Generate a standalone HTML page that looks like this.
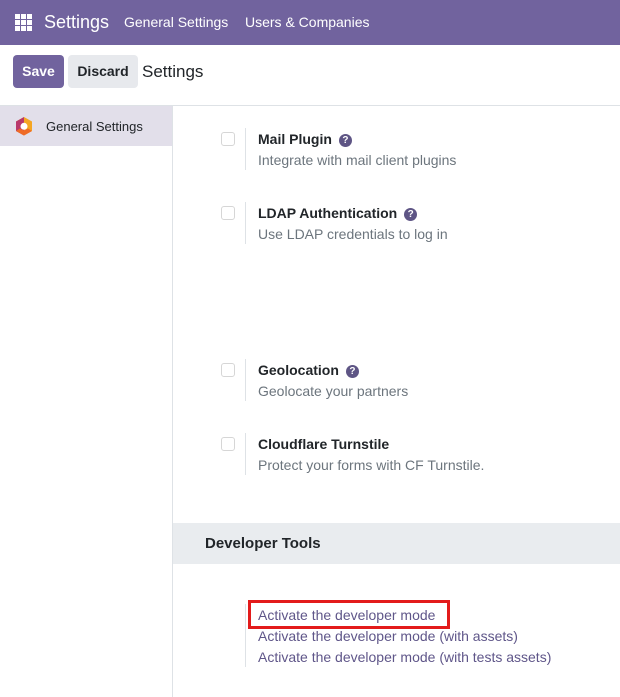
<!DOCTYPE html>
<html><head><style>
*{box-sizing:border-box;margin:0;padding:0}
body{width:620px;height:697px;overflow:hidden;font-family:"Liberation Sans",sans-serif;background:#fff;position:relative;color:#212529}
.nav{position:absolute;left:0;top:0;width:620px;height:45px;background:#71639e;color:#fff}
.nav span{position:absolute;top:0;line-height:45px}
.abs{position:absolute}
.btn{position:absolute;top:55px;height:33px;border-radius:4px;font-weight:bold;font-size:14px;line-height:33px;text-align:center}
.cb{position:absolute;left:221px;width:14px;height:14px;border:1px solid #d6d6d6;border-radius:3px;background:#fff}
.vl{position:absolute;left:245px;width:1px;background:#dee2e6}
.t{position:absolute;left:258px;font-size:14px;font-weight:bold;color:#212529}
.d{position:absolute;left:258px;font-size:14px;color:#6c757d}
.q{display:inline-block;width:13px;height:13px;border-radius:50%;background:#5e5585;color:#fff;font-size:10px;line-height:13px;text-align:center;margin-left:7px;vertical-align:1px}
.l{position:absolute;left:258px;font-size:14px;color:#5f5689}
</style></head><body>
<div class="nav">
<svg class="abs" style="left:15px;top:14px" width="17" height="17"><g fill="#fff"><rect x="0" y="0" width="5" height="5"/><rect x="6" y="0" width="5" height="5"/><rect x="12" y="0" width="5" height="5"/><rect x="0" y="6" width="5" height="5"/><rect x="6" y="6" width="5" height="5"/><rect x="12" y="6" width="5" height="5"/><rect x="0" y="12" width="5" height="5"/><rect x="6" y="12" width="5" height="5"/><rect x="12" y="12" width="5" height="5"/></g></svg>
<span style="left:44px;font-size:18px">Settings</span>
<span style="left:124px;font-size:14px">General Settings</span>
<span style="left:245px;font-size:14px">Users &amp; Companies</span>
</div>
<div class="btn" style="left:13px;width:51px;background:#71639e;color:#fff">Save</div>
<div class="btn" style="left:68px;width:70px;background:#e7e9ed;color:#212529">Discard</div>
<div class="abs" style="left:142px;top:62px;font-size:17px">Settings</div>
<div class="abs" style="left:0;top:105px;width:620px;height:1px;background:#dee2e6"></div>
<div class="abs" style="left:172px;top:106px;width:1px;height:591px;background:#dee2e6"></div>
<div class="abs" style="left:0;top:106px;width:172px;height:40px;background:#e2dfea"></div>
<svg class="abs" style="left:15px;top:117px" width="18" height="19" viewBox="0 0 18 19"><path d="M9 0L17 4.5V14L9 18.5L1 14V4.5Z" fill="#f5a623"/><path d="M9 0L1 4.5V14L9 18.5Z" fill="#b8386b"/><path d="M1 14L9 18.5L17 14L13 11.5L9 13.5L5 11.5Z" fill="#ef6b26"/><circle cx="9" cy="9.3" r="3.5" fill="#fff"/></svg>
<div class="abs" style="left:46px;top:119px;font-size:13px">General Settings</div>

<div class="cb" style="top:132px"></div><div class="vl" style="top:128px;height:42px"></div>
<div class="t" style="top:131px">Mail Plugin<span class="q">?</span></div>
<div class="d" style="top:152px">Integrate with mail client plugins</div>

<div class="cb" style="top:206px"></div><div class="vl" style="top:202px;height:42px"></div>
<div class="t" style="top:205px">LDAP Authentication<span class="q">?</span></div>
<div class="d" style="top:226px">Use LDAP credentials to log in</div>

<div class="cb" style="top:363px"></div><div class="vl" style="top:359px;height:42px"></div>
<div class="t" style="top:362px">Geolocation<span class="q">?</span></div>
<div class="d" style="top:383px">Geolocate your partners</div>

<div class="cb" style="top:437px"></div><div class="vl" style="top:433px;height:42px"></div>
<div class="t" style="top:436px">Cloudflare Turnstile</div>
<div class="d" style="top:457px">Protect your forms with CF Turnstile.</div>

<div class="abs" style="left:173px;top:523px;width:447px;height:41px;background:#e9ecef"></div>
<div class="abs" style="left:205px;top:535px;font-size:15px;font-weight:bold;color:#212529">Developer Tools</div>

<div class="vl" style="top:604px;height:63px"></div>
<div class="abs" style="left:248px;top:600px;width:202px;height:29px;border:3px solid #e31b1b"></div>
<div class="l" style="top:607px">Activate the developer mode</div>
<div class="l" style="top:628px">Activate the developer mode (with assets)</div>
<div class="l" style="top:649px">Activate the developer mode (with tests assets)</div>
</body></html>
